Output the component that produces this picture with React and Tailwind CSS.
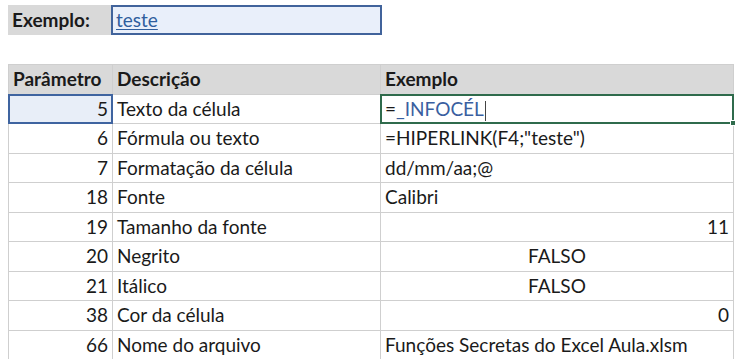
import React from "react";

const rows = [
  { p: "6", d: "Fórmula ou texto", e: '=HIPERLINK(F4;"teste")', a: "left" },
  { p: "7", d: "Formatação da célula", e: "dd/mm/aa;@", a: "left" },
  { p: "18", d: "Fonte", e: "Calibri", a: "left" },
  { p: "19", d: "Tamanho da fonte", e: "11", a: "right" },
  { p: "20", d: "Negrito", e: "FALSO", a: "center" },
  { p: "21", d: "Itálico", e: "FALSO", a: "center" },
  { p: "38", d: "Cor da célula", e: "0", a: "right" },
  { p: "66", d: "Nome do arquivo", e: "Funções Secretas do Excel Aula.xlsm", a: "left" },
];

const alignCls = {
  left: "text-left pl-[4px]",
  right: "text-right pr-[4px]",
  center: "text-center",
};

export default function App() {
  return (
    <div
      className="w-[737px] h-[359px] bg-white text-[#1a1a1a] overflow-hidden"
      style={{ fontFamily: "Lato, 'Open Sans', sans-serif" }}
    >
      <div className="pt-[5px] pl-[8px] flex h-[35px] text-[19px]">
        <div className="w-[103px] h-[30px] bg-[#d9d9d9] font-bold flex items-center pl-[4px]">
          Exemplo:
        </div>
        <div className="w-[271px] h-[30px] bg-[#e9effa] border-2 border-[#41639b] flex items-center pl-[3px]">
          <span className="text-[#2f5e9e] underline decoration-1 underline-offset-2">teste</span>
        </div>
      </div>

      <table className="mt-[29px] ml-[8px] border-collapse text-[19px] table-fixed w-[725px]">
        <colgroup>
          <col className="w-[104px]" />
          <col className="w-[268px]" />
          <col className="w-[353px]" />
        </colgroup>
        <thead>
          <tr className="h-[29px] bg-[#d9d9d9] font-bold">
            <th className="border border-[#cfcfcf] text-left pl-[4px] font-bold p-0">Parâmetro</th>
            <th className="border border-[#cfcfcf] text-left pl-[4px] font-bold p-0">Descrição</th>
            <th className="border border-[#cfcfcf] text-left pl-[4px] font-bold p-0">Exemplo</th>
          </tr>
        </thead>
        <tbody>
          <tr className="h-[29px]">
            <td className="relative border border-[#cfcfcf] bg-[#e8eef8] text-right pr-[4px] p-0">
              <div className="absolute inset-[-1px] border-2 border-[#3f64a0]"></div>
              <span className="relative">5</span>
            </td>
            <td className="border border-[#cfcfcf] pl-[4px] p-0">Texto da célula</td>
            <td className="relative border border-[#cfcfcf] pl-[4px] p-0">
              <div className="absolute inset-[-1px] border-2 border-[#2f6b4c]"></div>
              <div className="absolute right-[-3px] bottom-[-3px] w-[6px] h-[6px] bg-[#2f6b4c] border border-white"></div>
              <span className="relative">
                =<span className="text-[#3a5fa0]">_INFOCÉL</span>
                <span className="inline-block w-px h-[20px] bg-[#444] align-middle ml-[1px]"></span>
              </span>
            </td>
          </tr>
          {rows.map((r) => (
            <tr key={r.p} className="h-[29px]">
              <td className="border border-[#cfcfcf] text-right pr-[4px] p-0">{r.p}</td>
              <td className="border border-[#cfcfcf] pl-[4px] p-0">{r.d}</td>
              <td className={"border border-[#cfcfcf] p-0 " + alignCls[r.a]}>{r.e}</td>
            </tr>
          ))}
        </tbody>
      </table>
    </div>
  );
}
